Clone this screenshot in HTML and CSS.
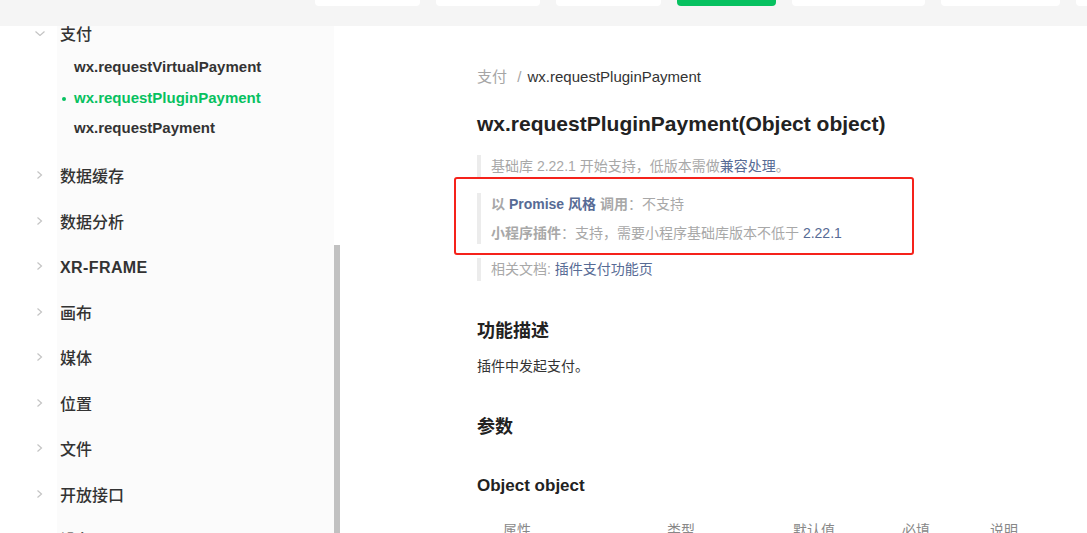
FILE: index.html
```html
<!DOCTYPE html>
<html lang="zh-CN">

<head>
    <meta charset="UTF-8">
    <title>wx.requestPluginPayment</title>
    <link rel="stylesheet" href="styles.css">
</head>

<body>
    <header class="topbar">
        <nav class="tabs">
            <span class="tab"></span>
            <span class="tab"></span>
            <span class="tab"></span>
            <span class="tab current"></span>
            <span class="tab"></span>
            <span class="tab"></span>
            <span class="tab"></span>
        </nav>
    </header>

    <div class="layout">
        <aside class="sidebar">
            <div class="group open">
                <div class="group-title">
                    <svg class="arrow" width="10" height="5" viewBox="0 0 10 5"><polyline points="0.5,0.5 5,4.5 9.5,0.5" /></svg>
                    <span>支付</span>
                </div>
                <ul class="sub">
                    <li>wx.requestVirtualPayment</li>
                    <li class="active">wx.requestPluginPayment</li>
                    <li>wx.requestPayment</li>
                </ul>
            </div>
            <div class="group">
                <div class="group-title">
                    <svg class="arrow" width="10" height="8" viewBox="0 0 10 8"><polyline points="2.5,0.5 6.5,4 2.5,7.5" /></svg>
                    <span>数据缓存</span>
                </div>
            </div>
            <div class="group">
                <div class="group-title">
                    <svg class="arrow" width="10" height="8" viewBox="0 0 10 8"><polyline points="2.5,0.5 6.5,4 2.5,7.5" /></svg>
                    <span>数据分析</span>
                </div>
            </div>
            <div class="group">
                <div class="group-title latin">
                    <svg class="arrow" width="10" height="8" viewBox="0 0 10 8"><polyline points="2.5,0.5 6.5,4 2.5,7.5" /></svg>
                    <span>XR-FRAME</span>
                </div>
            </div>
            <div class="group">
                <div class="group-title">
                    <svg class="arrow" width="10" height="8" viewBox="0 0 10 8"><polyline points="2.5,0.5 6.5,4 2.5,7.5" /></svg>
                    <span>画布</span>
                </div>
            </div>
            <div class="group">
                <div class="group-title">
                    <svg class="arrow" width="10" height="8" viewBox="0 0 10 8"><polyline points="2.5,0.5 6.5,4 2.5,7.5" /></svg>
                    <span>媒体</span>
                </div>
            </div>
            <div class="group">
                <div class="group-title">
                    <svg class="arrow" width="10" height="8" viewBox="0 0 10 8"><polyline points="2.5,0.5 6.5,4 2.5,7.5" /></svg>
                    <span>位置</span>
                </div>
            </div>
            <div class="group">
                <div class="group-title">
                    <svg class="arrow" width="10" height="8" viewBox="0 0 10 8"><polyline points="2.5,0.5 6.5,4 2.5,7.5" /></svg>
                    <span>文件</span>
                </div>
            </div>
            <div class="group">
                <div class="group-title">
                    <svg class="arrow" width="10" height="8" viewBox="0 0 10 8"><polyline points="2.5,0.5 6.5,4 2.5,7.5" /></svg>
                    <span>开放接口</span>
                </div>
            </div>
            <div class="group">
                <div class="group-title">
                    <svg class="arrow" width="10" height="8" viewBox="0 0 10 8"><polyline points="2.5,0.5 6.5,4 2.5,7.5" /></svg>
                    <span>设备</span>
                </div>
            </div>
        </aside>

        <div class="scrollbar">
            <div class="thumb"></div>
        </div>

        <main class="content">
            <div class="crumbs">
                <span class="parent">支付</span>
                <span class="sep">/</span>
                <span>wx.requestPluginPayment</span>
            </div>

            <h1>wx.requestPluginPayment(Object object)</h1>

            <blockquote class="note">
                <p>基础库 2.22.1 开始支持，低版本需做<a href="#">兼容处理</a>。</p>
            </blockquote>

            <blockquote class="note double">
                <p><b>以 <a href="#">Promise 风格</a> 调用</b>：不支持</p>
                <p><b>小程序插件</b>：支持，需要小程序基础库版本不低于 <a href="#">2.22.1</a></p>
            </blockquote>

            <blockquote class="note">
                <p>相关文档: <a href="#">插件支付功能页</a></p>
            </blockquote>

            <h2>功能描述</h2>
            <p class="text">插件中发起支付。</p>

            <h2>参数</h2>

            <h3>Object object</h3>

            <div class="table-head">
                <span>属性</span>
                <span>类型</span>
                <span>默认值</span>
                <span>必填</span>
                <span>说明</span>
            </div>
        </main>
    </div>

    <div class="marker"></div>
</body>

</html>
```

FILE: styles.css
```css
body {
    margin: 0;
    height: 533px;
    overflow: hidden;
    background-color: #fff;
    color: #333;
    font-family: "Liberation Sans", "Noto Sans CJK SC", sans-serif;
}

/* top bar */

.topbar {
    height: 26px;
    background-color: #f5f5f5;
}

.tabs {
    display: flex;
    gap: 16px;
    padding-left: 315px;
}

.tab {
    flex-shrink: 0;
    height: 6px;
    background-color: #fff;
    border-radius: 0 0 4px 4px;
}

.tab:nth-child(1) { width: 105px; }
.tab:nth-child(2) { width: 104px; }
.tab:nth-child(3) { width: 105px; }
.tab:nth-child(4) { width: 99px; }
.tab:nth-child(5) { width: 133px; }
.tab:nth-child(6) { width: 119px; }
.tab:nth-child(7) { width: 60px; }

.tab.current {
    background-color: #07c160;
}

/* sidebar */

.layout {
    display: flex;
}

.sidebar {
    width: 334px;
    flex-shrink: 0;
    background: linear-gradient(to right, #fff 57px, #fbfbfb 57px);
}

.group-title {
    display: flex;
    align-items: center;
    gap: 15px;
    height: 45.5px;
    padding-left: 35px;
    font-size: 16px;
    font-weight: 500;
    color: #333;
}

.group-title.latin {
    font-weight: 700;
    letter-spacing: 0.4px;
}

.group-title.latin span {
    padding-top: 3px;
}

.group.open .group-title {
    height: 14px;
}

.arrow {
    width: 10px;
    fill: none;
    stroke: #c4c4c4;
    stroke-width: 1.2;
}

.sub {
    list-style: none;
    margin: 12px 0 9px;
    padding: 0;
}

.sub li {
    position: relative;
    height: 30.5px;
    line-height: 30.5px;
    padding-left: 74px;
    font-size: 15px;
    font-weight: 700;
    color: #333;
}

.sub li.active {
    color: #07c160;
}

.sub li.active::before {
    content: "";
    position: absolute;
    left: 62px;
    top: 14px;
    width: 4px;
    height: 4px;
    border-radius: 50%;
    background-color: #07c160;
}

.scrollbar {
    width: 6px;
    flex-shrink: 0;
}

.thumb {
    margin-top: 219px;
    height: 300px;
    background-color: #c1c1c1;
}

/* content */

.content {
    flex: 1;
    padding: 41px 0 0 137px;
}

.crumbs {
    font-size: 15px;
    line-height: 20px;
}

.crumbs .parent {
    color: #a5a5a5;
}

.crumbs .sep {
    color: #a5a5a5;
    margin: 0 2px 0 6px;
}

h1 {
    margin: 23px 0 17px;
    font-size: 21px;
    line-height: 28px;
    font-weight: 700;
    color: #222;
}

.note {
    margin: 0 0 15px;
    padding-left: 10px;
    border-left: 4px solid #ececec;
    font-size: 14px;
    line-height: 23px;
    color: #a8a8a8;
}

.note p {
    margin: 0;
}

.note.double p {
    line-height: 22px;
}

.note.double p + p {
    margin-top: 7px;
}

.note.double {
    margin-bottom: 14px;
}

.note b {
    font-weight: 700;
}

.note a {
    color: #576b95;
    text-decoration: none;
}

h2 {
    margin: 37px 0 11px;
    font-size: 18px;
    line-height: 26px;
    font-weight: 700;
    color: #222;
}

.text {
    margin: 0;
    font-size: 14px;
    line-height: 22px;
}

h3 {
    margin: 34px 0 21px;
    font-size: 17px;
    line-height: 24px;
    font-weight: 700;
    color: #222;
}

.table-head {
    display: grid;
    grid-template-columns: 164px 126px 109px 88px 1fr;
    font-size: 14px;
    line-height: 22px;
    color: #888;
}

.table-head span {
    padding-left: 26px;
}

/* red annotation box laid over the note */

.marker {
    position: absolute;
    left: 454px;
    top: 177px;
    width: 456px;
    height: 74px;
    border: 2px solid #f5221b;
    border-radius: 3px;
}
```
